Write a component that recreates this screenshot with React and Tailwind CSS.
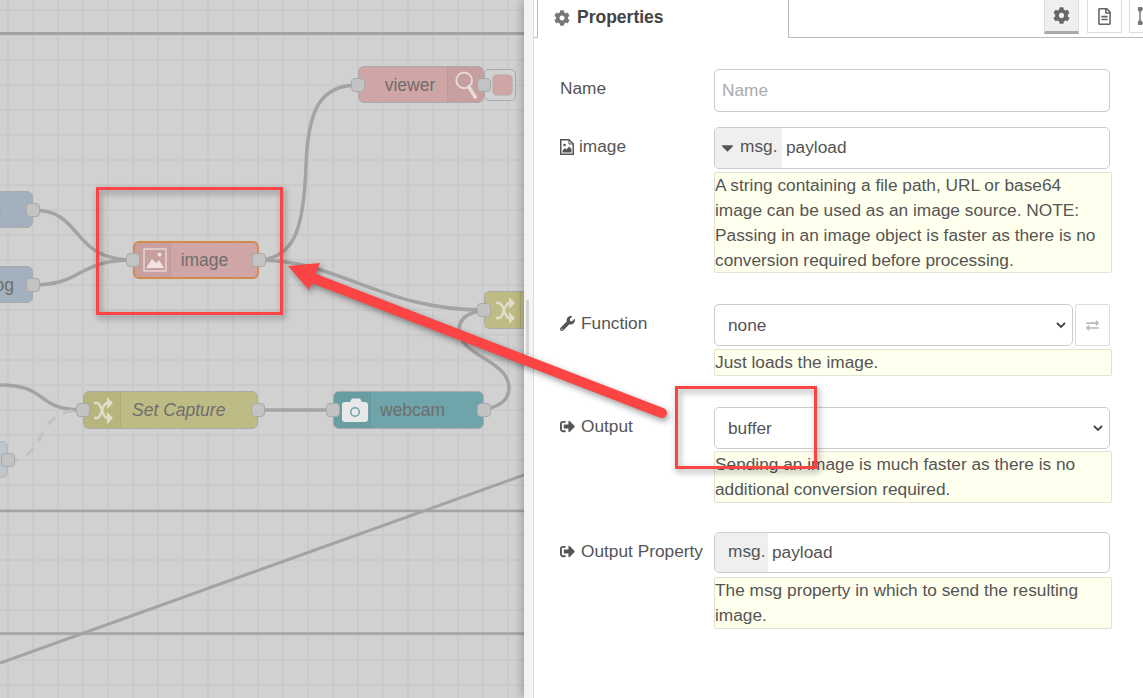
import { FaCog, FaRegFileAlt, FaWrench, FaSignOutAlt, FaExchangeAlt, FaCaretDown } from 'react-icons/fa';

const ImageIcon = () => (
    <svg viewBox="0 0 24 24" className="w-[24px] h-[24px]" fill="none">
        <rect x="1" y="1" width="22" height="22" stroke="#e6d5d5" strokeWidth="1.5" />
        <path d="M3 20 L9 11 L13 15 L16 12 L21 20 Z" fill="#efe3e3" />
        <circle cx="16.5" cy="6.5" r="2" fill="#efe3e3" />
    </svg>
);

const FileImageIcon = () => (
    <svg viewBox="0 0 14 16" className="w-[14px] h-[16px] shrink-0" fill="none">
        <path d="M0.75 0.75 H9 L13.25 5 V15.25 H0.75 Z" stroke="#555" strokeWidth="1.5" />
        <path d="M9 1 V5 H13" stroke="#555" />
        <path d="M2.5 13.5 V11.5 L5 9 L6.5 10.5 L9 7.5 L11.5 10 V13.5 Z" fill="#555" />
        <circle cx="4.5" cy="6" r="1.3" fill="#555" />
    </svg>
);

const SearchIcon = () => (
    <svg viewBox="0 0 26 32" className="w-[24px] h-[30px]" fill="none" stroke="#e9dada" strokeLinecap="round">
        <circle cx="11" cy="11" r="8.5" strokeWidth="2" />
        <path d="M16 18 L23 29" strokeWidth="4" />
    </svg>
);

const ShuffleIcon = () => (
    <svg viewBox="0 0 20 30" className="w-[20px] h-[30px]" fill="none" stroke="#e0decb" strokeWidth="2.4">
        <path d="M1 8 H4 C9 8 9 23 14 23 H16" />
        <path d="M1 23 H4 C9 23 9 8 14 8 H16" />
        <path d="M14 2 L20 8 L14 14 Z M14 17 L20 23 L14 29 Z" fill="#e0decb" stroke="none" />
    </svg>
);

const CameraIcon = () => (
    <svg viewBox="0 0 26 24" className="w-[26px] h-[24px]">
        <path d="M3 4 H8 L10 0.5 H18 L20 4 H23 Q26 4 26 7 V21 Q26 24 23 24 H3 Q0 24 0 21 V7 Q0 4 3 4 Z" fill="#e8e8e8" />
        <circle cx="13" cy="14" r="4.3" fill="none" stroke="#6fa5aa" strokeWidth="1.6" />
    </svg>
);

const Port = ({ className }) => (
    <div className={`absolute w-[14px] h-[14px] rounded-[4px] bg-[#c3c3c3] border border-[#a9a9a9] ${className}`} />
);

const Wires = () => (
    <svg className="absolute inset-0 w-full h-full" fill="none" stroke="#a3a3a3" strokeWidth="3.5">
        <path d="M0 33.5 H524" strokeWidth="3" />
        <path d="M0 511 H524" strokeWidth="2.5" />
        <path d="M0 633.5 H524" strokeWidth="2.5" />
        <path d="M0 663 L524 475" strokeWidth="3" />
        <path d="M33 210 C84 210 70 260 133 260" />
        <path d="M33 285 C84 285 76 260 133 260" />
        <path d="M259 260 C296 258 304 225 306 165 C308 110 320 85 358 85" />
        <path d="M259 260 C340 260 380 310 484 310" />
        <path d="M484 410 C500 406 509 400 509 388 C509 360 459 356 459 330 C459 318 470 312 484 310" />
        <path d="M0 385 C50 385 34 410 83 410" />
        <path d="M8 460 C50 460 30 410 83 410" stroke="#c2c2c2" strokeWidth="3" strokeDasharray="10 9" />
        <path d="M258 410 H333" />
    </svg>
);

const Canvas = () => (
    <div className="relative w-[524px] h-full shrink-0 overflow-hidden bg-[#d1d1d1] bg-[linear-gradient(#cacaca_2px,transparent_2px),linear-gradient(90deg,#cacaca_2px,transparent_2px)] bg-[size:25px_25px] bg-[position:7px_9px]">
        <Wires />

        {/* Nodes */}
        <div className="absolute left-[-60px] top-[191px] w-[93px] h-[37px] rounded-[6px] bg-[#a3b0bd] border border-[#a9a9a9] text-[#6e6e6e] text-[17.5px] text-right leading-[36px] pr-[31px]">
            d
            <Port className="right-[-8px] top-[11px]" />
        </div>
        <div className="absolute left-[-60px] top-[266px] w-[93px] h-[37px] rounded-[6px] bg-[#a3b0bd] border border-[#a9a9a9] text-[#6e6e6e] text-[17.5px] text-right leading-[36px] pr-[18px]">
            og
            <Port className="right-[-8px] top-[11px]" />
        </div>
        <div className="absolute left-[-40px] top-[441px] w-[48px] h-[37px] rounded-[6px] bg-[#bfc6cc] border border-[#b5b5b5]">
            <Port className="right-[-8px] top-[11px]" />
        </div>

        <div className="absolute left-[133px] top-[241px] w-[126px] h-[38px] flex rounded-[6px] bg-[#cfa5a5] border-2 border-[#d38b4c] text-[#6e6e6e] text-[17.5px]">
            <div className="w-[36px] h-full flex items-center justify-center pl-[5px] bg-[#c89f9f] rounded-l-[4px] border-r border-[#c39a9a]">
                <ImageIcon />
            </div>
            <div className="flex-1 text-center leading-[34px] pr-[19px]">image</div>
            <Port className="left-[-9px] top-[10px]" />
            <Port className="right-[-9px] top-[10px]" />
        </div>

        <div className="absolute left-[484px] top-[69px] w-[32px] h-[32px] rounded-[5px] bg-[#d1d1d1] border border-[#aaa] flex items-center justify-center pl-[4px]">
            <div className="w-[21px] h-[22px] rounded-[5px] bg-[#cfa5a5] border border-[#bcbcbc]" />
        </div>
        <div className="absolute left-[358px] top-[66px] w-[126px] h-[37px] flex rounded-[6px] bg-[#cfa5a5] border border-[#aaa] text-[#6e6e6e] text-[17.5px]">
            <div className="flex-1 text-center leading-[36px] pl-[14px]">viewer</div>
            <div className="w-[36px] h-full flex items-center pl-[6px] bg-[#c89f9f] rounded-r-[5px] border-l border-[#c39a9a]">
                <SearchIcon />
            </div>
            <Port className="left-[-8px] top-[11px]" />
            <Port className="right-[-8px] top-[11px]" />
        </div>

        <div className="absolute left-[83px] top-[391px] w-[175px] h-[38px] flex rounded-[6px] bg-[#bfbb84] border border-[#aaa] text-[#6e6e6e] text-[17.5px] italic">
            <div className="w-[37px] h-full flex items-center justify-center pl-[2px] bg-[#b8b47e] rounded-l-[5px] border-r border-[#b3af79]">
                <ShuffleIcon />
            </div>
            <div className="pl-[11px] leading-[36px]">Set Capture</div>
            <Port className="left-[-8px] top-[11px]" />
            <Port className="right-[-8px] top-[11px]" />
        </div>

        <div className="absolute left-[333px] top-[391px] w-[151px] h-[38px] flex rounded-[6px] bg-[#6fa5aa] border border-[#aaa] text-[#6e6e6e] text-[17.5px]">
            <div className="w-[37px] h-full flex items-center justify-center pl-[6px] bg-[#689da2] rounded-l-[5px] border-r border-[#64989d]">
                <CameraIcon />
            </div>
            <div className="pl-[9px] leading-[36px]">webcam</div>
            <Port className="left-[-8px] top-[11px]" />
            <Port className="right-[-8px] top-[11px]" />
        </div>

        <div className="absolute left-[484px] top-[291px] w-[60px] h-[38px] flex rounded-[6px] bg-[#bfbb84] border border-[#aaa]">
            <div className="w-[36px] h-full flex items-center justify-center pl-[4px] bg-[#bfbb84] border-r border-[#b3af79]">
                <ShuffleIcon />
            </div>
            <Port className="left-[-8px] top-[11px]" />
        </div>
    </div>
);

const Tip = ({ className, children }) => (
    <div className={`w-[398px] bg-[#ffffee] border border-[#e3e3d3] rounded-[2px] leading-[25px] ${className}`}>
        {children}
    </div>
);

const Label = ({ icon, children }) => (
    <label className="w-[154px] shrink-0 self-start mt-[7px] h-[25px] leading-[25px] flex items-center gap-[6px] whitespace-nowrap">
        {icon}
        {children}
    </label>
);

const Select = ({ value, className }) => (
    <div className={`relative ${className}`}>
        <select defaultValue={value} className="block w-full h-[42px] pl-[13px] pt-[2px] border border-[#ccc] rounded-[5px] bg-white appearance-none">
            <option>{value}</option>
        </select>
        <svg viewBox="0 0 10 7" className="absolute right-[7px] top-[18px] w-[10px] h-[7px]" fill="none" stroke="#444" strokeWidth="1.8">
            <path d="M1 1 L5 5 L9 1" />
        </svg>
    </div>
);

const Sidebar = () => (
    <div className="flex-1 min-w-0 flex h-full bg-white shadow-[-3px_0_8px_rgba(0,0,0,0.2)] z-10 font-['Liberation_Sans',Arial,sans-serif] text-[17.3px] text-[#555]">
        {/* Splitter */}
        <div className="w-[10px] shrink-0 bg-[#f3f3f3] border-r border-[#ddd] pt-[300px] pl-[2px]">
            <div className="w-[3px] h-[55px] bg-[#d4d4d4]" />
        </div>

        <div className="flex-1 min-w-0">
            {/* Tabs */}
            <div className="h-[38px] flex border-b border-[#bbb] pl-[3px]">
                <div className="w-[252px] h-[38px] shrink-0 bg-white border-x border-[#bbb] flex items-center pl-[16px] pb-[3px] gap-[7px] font-bold text-[17.5px] text-[#444]">
                    <FaCog className="text-[#777] text-[16px]" />
                    Properties
                </div>
                <div className="ml-[255px] w-[35px] h-[34px] shrink-0 bg-[#efefef] border-b-[3px] border-x border-[#ddd] border-b-[#aaa] flex items-center justify-center">
                    <FaCog className="text-[#666] text-[17px]" />
                </div>
                <div className="ml-[8px] w-[35px] h-[33px] shrink-0 border-x border-b border-[#ddd] flex items-center justify-center">
                    <FaRegFileAlt className="text-[#666] text-[17px]" />
                </div>
                <div className="ml-[7px] w-[35px] h-[33px] shrink-0 border-l border-b border-[#ddd] pl-[8px] pt-[7px]">
                    <svg viewBox="0 0 18 18" className="w-[18px] h-[18px]" fill="none" stroke="#777" strokeWidth="1.5">
                        <rect x="2" y="2" width="14" height="14" />
                        <rect x="0.5" y="0.5" width="3" height="3" fill="#777" />
                        <rect x="0.5" y="14.5" width="3" height="3" fill="#777" />
                    </svg>
                </div>
            </div>

            {/* Form */}
            <form className="pl-[26px] pt-[31px]">
                <div className="flex">
                    <Label>Name</Label>
                    <input
                        placeholder="Name"
                        className="w-[396px] h-[43px] px-[7px] pb-[1px] border border-[#ccc] rounded-[5px] outline-none placeholder:text-[#aaa]"
                    />
                </div>

                <div className="flex mt-[15px]">
                    <Label icon={<FileImageIcon />}>
                        <span className="ml-[-1px]">image</span>
                    </Label>
                    <div>
                        <div className="w-[396px] h-[42px] flex border border-[#ccc] rounded-[5px] overflow-hidden">
                            <div className="w-[67px] h-full bg-[#efefef] flex items-center pl-[3px] pb-[2px] gap-[3px]">
                                <FaCaretDown className="text-[#555] text-[19px]" />
                                msg.
                            </div>
                            <div className="pl-[4px] leading-[38px]">payload</div>
                        </div>
                        <Tip className="mt-[3px] h-[101px]">
                            A string containing a file path, URL or base64 image can be used as an image source. NOTE: Passing in an image object is faster as there is no conversion required before processing.
                        </Tip>
                    </div>
                </div>

                <div className="flex mt-[31px]">
                    <Label icon={<FaWrench className="text-[15px]" />}>Function</Label>
                    <div>
                        <div className="flex gap-[2px]">
                            <Select value="none" className="w-[359px]" />
                            <div className="w-[35px] h-[42px] border border-[#ddd] rounded-[2px] flex items-center justify-center">
                                <FaExchangeAlt className="text-[#bbb] text-[13px]" />
                            </div>
                        </div>
                        <Tip className="mt-[3px] h-[27px]">Just loads the image.</Tip>
                    </div>
                </div>

                <div className="flex mt-[31px]">
                    <Label icon={<FaSignOutAlt className="text-[15px]" />}>Output</Label>
                    <div>
                        <Select value="buffer" className="w-[396px]" />
                        <Tip className="mt-[2px] h-[52px]">
                            Sending an image is much faster as there is no additional conversion required.
                        </Tip>
                    </div>
                </div>

                <div className="flex mt-[29px]">
                    <Label icon={<FaSignOutAlt className="text-[15px]" />}>Output Property</Label>
                    <div>
                        <div className="w-[396px] h-[41px] flex border border-[#ccc] rounded-[5px] overflow-hidden">
                            <div className="w-[53px] h-full bg-[#efefef] flex items-center pl-[13px] pb-[2px]">msg.</div>
                            <div className="pl-[4px] leading-[38px]">payload</div>
                        </div>
                        <Tip className="mt-[4px] h-[52px]">The msg property in which to send the resulting image.</Tip>
                    </div>
                </div>
            </form>
        </div>
    </div>
);

const Annotations = () => (
    <>
        <svg className="absolute inset-0 w-full h-full z-20 pointer-events-none drop-shadow-[2px_3px_3px_rgba(0,0,0,0.4)]" fill="#fb4444" stroke="#fb4444">
            <path d="M310 277 L662 413" strokeWidth="10" strokeLinecap="round" />
            <polygon points="288,266 320,263 309,290" stroke="none" />
        </svg>
        <div className="absolute z-20 left-[96px] top-[187px] w-[187px] h-[128px] border-[3px] border-[#fb4444] drop-shadow-[2px_3px_3px_rgba(0,0,0,0.4)]" />
        <div className="absolute z-20 left-[675px] top-[386px] w-[142px] h-[83px] border-[3px] border-[#fb4444] drop-shadow-[2px_3px_3px_rgba(0,0,0,0.4)]" />
    </>
);

const App = () => (
    <div className="relative flex w-[1143px] h-[698px] overflow-hidden font-['Liberation_Sans',Arial,sans-serif]">
        <Canvas />
        <Sidebar />
        <Annotations />
    </div>
);

export default App;
